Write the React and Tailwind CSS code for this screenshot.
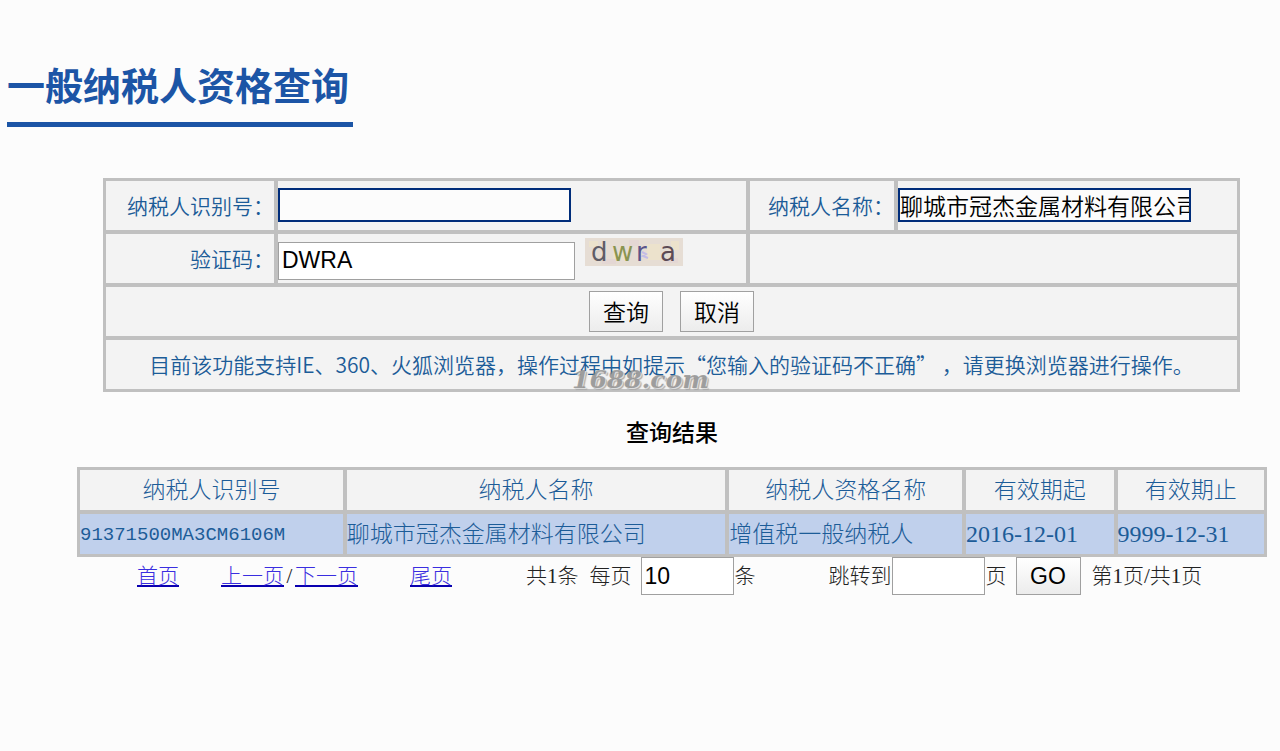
const cell = 'border-[#c0c0c0] border-t-4 border-l-4 first:border-l-0';
const sans = "font-['Liberation_Sans','Noto_Sans_CJK_SC',sans-serif]";
const song = "font-['Liberation_Serif','Noto_Sans_CJK_SC',serif]";
const btn = `h-[41px] w-[74px] border border-[#a0a0a0] bg-linear-to-b from-white to-[#ececec] pt-[2px] text-[23px] leading-7 font-[350] text-black ${sans}`;
const pageInput = `h-[38px] w-[93px] border border-[#a0a0a0] bg-white px-[3px] text-[23px] leading-7 font-normal text-black ${sans}`;
const link = 'text-[#3a2ee0] underline decoration-2 decoration-[#0a00b0] underline-offset-2';

const columns = [
  { name: '纳税人识别号', width: 'w-[22.2%]' },
  { name: '纳税人名称', width: 'w-[32.3%]' },
  { name: '纳税人资格名称', width: 'w-[20%]' },
  { name: '有效期起', width: 'w-[12.8%]' },
  { name: '有效期止', width: '' },
];

const rows = [
  {
    id: '91371500MA3CM6106M',
    company: '聊城市冠杰金属材料有限公司',
    type: '增值税一般纳税人',
    from: '2016-12-01',
    to: '9999-12-31',
  },
];

function Captcha() {
  return (
    <svg className="overflow-visible" width="98" height="28" viewBox="0 0 98 28" role="img" aria-label="验证码">
      <rect width="98" height="28" fill="#e6ddd4" />
      <g fill="#ece2cc">
        <rect x="4" y="3" width="9" height="6" />
        <rect x="28" y="15" width="12" height="7" />
        <rect x="62" y="6" width="13" height="16" />
        <rect x="86" y="3" width="8" height="9" />
      </g>
      <g fill="#e4d7d4">
        <rect x="17" y="21" width="14" height="5" />
        <rect x="44" y="2" width="10" height="6" />
        <rect x="80" y="20" width="13" height="5" />
      </g>
      <path d="M57 14l4 2l-3 2l5 2" fill="none" stroke="#c3bce6" strokeWidth="2" />
      <g fontFamily="'DejaVu Sans', sans-serif" fontSize="26" fontWeight="400">
        <text x="6" y="23" fill="#5f5c66">d</text>
        <text x="27" y="23" fill="#8a9450">w</text>
        <text x="51" y="23" fill="#5a548a">r</text>
        <text x="75" y="23" fill="#5c4a56">a</text>
      </g>
    </svg>
  );
}

function QueryForm() {
  return (
    <form className="relative ml-[103px] mr-10 mt-[51px]" onSubmit={(e) => e.preventDefault()}>
      <table className="w-full table-fixed border-separate border-spacing-0 border-3 border-[#c0c0c0] bg-[#f3f3f3] text-[21px] leading-7 text-[#1c5c98] [&_tr:first-child>*]:border-t-0">
        <colgroup>
          <col className="w-[168px]" />
          <col />
          <col className="w-[148px]" />
          <col className="w-[343px]" />
        </colgroup>
        <tbody>
          <tr className="h-[49px]">
            <td className={`${cell} p-0 pb-[2px] text-right`}>
              <label htmlFor="taxId">纳税人识别号：</label>
            </td>
            <td className={`${cell} p-0 pb-[2px]`}>
              <input id="taxId" type="text" className={`block h-[34px] w-[293px] border-2 border-[#002d7a] bg-[#fcfcfc] text-[23px] leading-7 text-black ${sans}`} />
            </td>
            <td className={`${cell} p-0 pb-[2px] text-right`}>
              <label htmlFor="taxName">纳税人名称：</label>
            </td>
            <td className={`${cell} p-0 pb-[2px]`}>
              <input id="taxName" type="text" defaultValue="聊城市冠杰金属材料有限公司" className={`block h-[34px] w-[293px] border-2 border-[#002d7a] bg-[#fcfcfc] text-[23px] leading-7 text-black ${sans}`} />
            </td>
          </tr>
          <tr className="h-[53px]">
            <td className={`${cell} p-0 pb-[2px] text-right`}>
              <label htmlFor="code">验证码：</label>
            </td>
            <td className={`${cell} p-0`}>
              <div className="flex items-start gap-[10px]">
                <input id="code" type="text" defaultValue="DWRA" className={`mt-1 h-[38px] w-[297px] border border-[#a0a0a0] bg-white px-[3px] text-[23px] leading-7 text-black ${sans}`} />
                <Captcha />
              </div>
            </td>
            <td className={`${cell} p-0`} colSpan={2}></td>
          </tr>
          <tr className="h-[53px]">
            <td className={`${cell} p-0`} colSpan={4}>
              <div className="flex justify-center gap-[17px]">
                <button type="submit" className={btn}>查询</button>
                <button type="reset" className={btn}>取消</button>
              </div>
            </td>
          </tr>
          <tr className="h-[53px]">
            <td className={`${cell} p-0 pb-[2px] text-center`} colSpan={4}>
              目前该功能支持IE、360、火狐浏览器，操作过程中如提示“您输入的验证码不正确”&nbsp;，请更换浏览器进行操作。
            </td>
          </tr>
        </tbody>
      </table>
      <span className="pointer-events-none absolute bottom-0 left-[469px] font-['DejaVu_Serif',serif] text-[25px] leading-6 font-bold text-[#808080]/70 italic [text-shadow:1px_1px_0px_#dddddd,2px_2px_1px_#aaaaaa]">
        1688.com
      </span>
    </form>
  );
}

function ResultTable() {
  return (
    <table className={`w-full table-fixed border-separate border-spacing-0 border-3 border-[#c0c0c0] text-[23px] leading-7 font-light text-[#1c5c98] ${song}`}>
      <thead>
        <tr className="h-10 bg-[#f3f3f3]">
          {columns.map((c) => (
            <th key={c.name} className={`${c.width} border-l-4 border-[#c0c0c0] p-0 pt-[2px] text-center font-light first:border-l-0`}>
              {c.name}
            </th>
          ))}
        </tr>
      </thead>
      <tbody>
        {rows.map((r) => (
          <tr key={r.id} className="h-11 bg-[#c0d0ec]">
            <td className={`${cell} p-0 pt-[2px] font-['Liberation_Mono',monospace] text-[19px]`}>{r.id}</td>
            <td className={`${cell} p-0 pt-[2px]`}>{r.company}</td>
            <td className={`${cell} p-0 pt-[2px]`}>{r.type}</td>
            <td className={`${cell} p-0 text-[24px]`}>{r.from}</td>
            <td className={`${cell} p-0 text-[24px]`}>{r.to}</td>
          </tr>
        ))}
      </tbody>
    </table>
  );
}

function Pager() {
  return (
    <div className={`flex items-center pl-[60px] text-[21px] leading-7 font-light whitespace-nowrap text-[#222] ${song}`}>
      <a href="#first" className={link}>首页</a>
      <a href="#prev" className={`ml-[42px] ${link}`}>上一页</a>
      <span className="w-[11px] text-center">/</span>
      <a href="#next" className={link}>下一页</a>
      <a href="#last" className={`ml-[52px] ${link}`}>尾页</a>
      <span className="ml-[74px]">共1条</span>
      <label htmlFor="pageSize" className="ml-[11px]">每页</label>
      <input id="pageSize" type="text" defaultValue="10" className={`ml-[9px] ${pageInput}`} />
      <span className="ml-px">条</span>
      <label htmlFor="jump" className="ml-[73px]">跳转到</label>
      <input id="jump" type="text" className={pageInput} />
      <span className="ml-px">页</span>
      <button type="button" className={`ml-[9px] h-[38px] w-[65px] border border-[#a0a0a0] bg-linear-to-b from-white to-[#ececec] text-[23px] leading-7 font-normal text-black ${sans}`}>
        GO
      </button>
      <span className="ml-[11px]">第1页/共1页</span>
    </div>
  );
}

export default function App() {
  return (
    <main className="min-h-screen bg-[#fcfcfc] pt-[58px] font-['Noto_Sans_CJK_SC',sans-serif] font-[350]">
      <h1 className="ml-[7px] w-fit border-b-5 border-[#1c55a6] pr-1 pb-3 text-[38px] leading-13 font-bold text-[#1c55a6]">
        一般纳税人资格查询
      </h1>
      <QueryForm />
      <section className="ml-[77px] mr-[13px] mt-[28px]">
        <h2 className={`mb-[19px] text-center text-[23px] leading-7 font-medium text-black ${song}`}>查询结果</h2>
        <ResultTable />
        <Pager />
      </section>
    </main>
  );
}
